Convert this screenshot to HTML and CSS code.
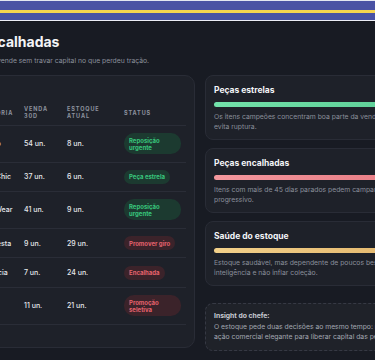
FILE: index.html
```html
<!DOCTYPE html>
<html lang="pt-BR">
<head>
<meta charset="utf-8">
<title>Estoque</title>
<link rel="stylesheet" href="styles.css">
</head>
<body>
<div class="stripe"></div>
<main class="page">
  <header class="head">
    <h1>As encalhadas</h1>
    <p>O que mais vende sem travar capital no que perdeu tração.</p>
  </header>
  <div class="grid">
    <section class="card table-card">
      <div class="row thead">
        <span>CATEGORIA</span>
        <span>VENDA<br>30D</span>
        <span>ESTOQUE<br>ATUAL</span>
        <span>STATUS</span>
      </div>
      <div class="row">
        <span>Algodão</span><span>54 un.</span><span>8 un.</span>
        <span><em class="badge ok">Reposição urgente</em></span>
      </div>
      <div class="row">
        <span>Blazer Chic</span><span>37 un.</span><span>6 un.</span>
        <span><em class="badge ok">Peça estrela</em></span>
      </div>
      <div class="row">
        <span>Street Wear</span><span>41 un.</span><span>9 un.</span>
        <span><em class="badge ok">Reposição urgente</em></span>
      </div>
      <div class="row">
        <span>Linha Festa</span><span>9 un.</span><span>29 un.</span>
        <span><em class="badge bad">Promover giro</em></span>
      </div>
      <div class="row">
        <span>Tendência</span><span>7 un.</span><span>24 un.</span>
        <span><em class="badge bad">Encalhada</em></span>
      </div>
      <div class="row">
        <span>Malhas</span><span>11 un.</span><span>21 un.</span>
        <span><em class="badge bad">Promoção seletiva</em></span>
      </div>
    </section>
    <aside class="side">
      <div class="card info">
        <h2>Peças estrelas</h2>
        <div class="bar green"></div>
        <p>Os itens campeões concentram boa parte da venda do mês, e repor cedo<br>evita ruptura.</p>
      </div>
      <div class="card info">
        <h2>Peças encalhadas</h2>
        <div class="bar red"></div>
        <p>Itens com mais de 45 dias parados pedem campanha com desconto<br>progressivo.</p>
      </div>
      <div class="card info">
        <h2>Saúde do estoque</h2>
        <div class="bar gold"></div>
        <p>Estoque saudável, mas dependente de poucos best-sellers: comprar com<br>inteligência e não inflar coleção.</p>
      </div>
      <div class="insight">
        <h3>Insight do chefe:</h3>
        <p>O estoque pede duas decisões ao mesmo tempo: recompor as estrelas e criar uma<br>ação comercial elegante para liberar capital das peças paradas.</p>
      </div>
    </aside>
  </div>
</main>
<div class="next"></div>
</body>
</html>
```
FILE: styles.css
```css
html, body {
  margin: 0;
  padding: 0;
}
body {
  background: #181b23;
  font-family: Inter, "Noto Sans", sans-serif;
  color: #eef0f4;
  width: 375px;
  height: 360px;
  overflow: hidden;
}
.stripe {
  height: 22px;
  background: linear-gradient(to bottom,
    #e3e6f1 0 1px,
    #4a52a4 1px 10px,
    #f6d44f 10px 13px,
    #4a52a4 13px 20px,
    #eceef6 20px 21px,
    #14161d 21px 22px);
}
.page {
  margin-left: -41px;
  width: 600px;
}
.head {
  padding-top: 11px;
}
.head h1 {
  margin: 0;
  font-size: 14px;
  line-height: 18px;
  font-weight: 700;
  color: #f3f4f7;
}
.head p {
  margin: 5px 0 0;
  font-size: 6.8px;
  line-height: 10px;
  color: #8b909c;
}
.grid {
  margin-top: 9px;
  display: grid;
  grid-template-columns: 236px 320px;
  gap: 10px;
  align-items: start;
}
.card {
  background: #1e2129;
  border: 1px solid #292c36;
  box-sizing: border-box;
}
.table-card {
  border-radius: 10px;
  padding: 30px 8px 27px 13px;
  height: 273px;
}
.row {
  display: grid;
  grid-template-columns: 51px 43px 57px 1fr;
  align-items: center;
  padding: 7.3px 0;
  border-bottom: 1px solid #2a2d37;
  font-size: 7px;
  font-weight: 500;
  color: #e6e8ec;
  line-height: 9px;
}
.row > span {
  white-space: nowrap;
}
.thead {
  padding: 0 0 5px;
  font-size: 5.5px;
  font-weight: 700;
  letter-spacing: 0.9px;
  line-height: 7px;
  color: #8d929e;
}
.badge {
  display: inline-block;
  font-style: normal;
  white-space: normal;
  max-width: 47px;
  padding: 3.5px 5px;
  border-radius: 10px;
  font-size: 6px;
  line-height: 7px;
  font-weight: 700;
}
.badge.ok {
  background: #1c3a30;
  color: #38c67c;
}
.badge.bad {
  background: #3b232a;
  color: #e4626d;
}
.side {
  display: flex;
  flex-direction: column;
  gap: 8px;
}
.info {
  border-radius: 8px;
  padding: 9px 8px 7px;
}
.info h2 {
  margin: 0;
  font-size: 8.5px;
  line-height: 11px;
  font-weight: 700;
  color: #f3f4f7;
}
.bar {
  margin-top: 6px;
  height: 5px;
  border-radius: 3px;
}
.bar.green {
  background: linear-gradient(90deg, #72e2aa, #52c38c);
}
.bar.red {
  background: linear-gradient(90deg, #f3979d, #e26d76);
}
.bar.gold {
  background: linear-gradient(90deg, #f2d08a, #dcaa5e);
}
.info p {
  margin: 5px 0 0;
  font-size: 6.8px;
  line-height: 10px;
  color: #8a8f9b;
  white-space: nowrap;
}
.insight {
  margin-top: 9px;
  border: 1px dashed #363944;
  background: #1f2229;
  border-radius: 8px;
  padding: 7px 8px 8px;
}
.insight h3 {
  margin: 0;
  font-size: 6.8px;
  line-height: 10px;
  font-weight: 700;
  color: #c9ccd4;
}
.insight p {
  margin: 1px 0 0;
  font-size: 6.8px;
  line-height: 10px;
  color: #a3a7b1;
  white-space: nowrap;
}
.next {
  margin-top: 9px;
  height: 4px;
  background: linear-gradient(90deg,
    #a8d5db 0 70px,
    #262930 70px 128px,
    #6d645d 128px 205px,
    #3a3d46 205px 265px,
    #5c5650 265px 330px,
    #2a2d35 330px 365px,
    #d8a14a 365px);
}
```
